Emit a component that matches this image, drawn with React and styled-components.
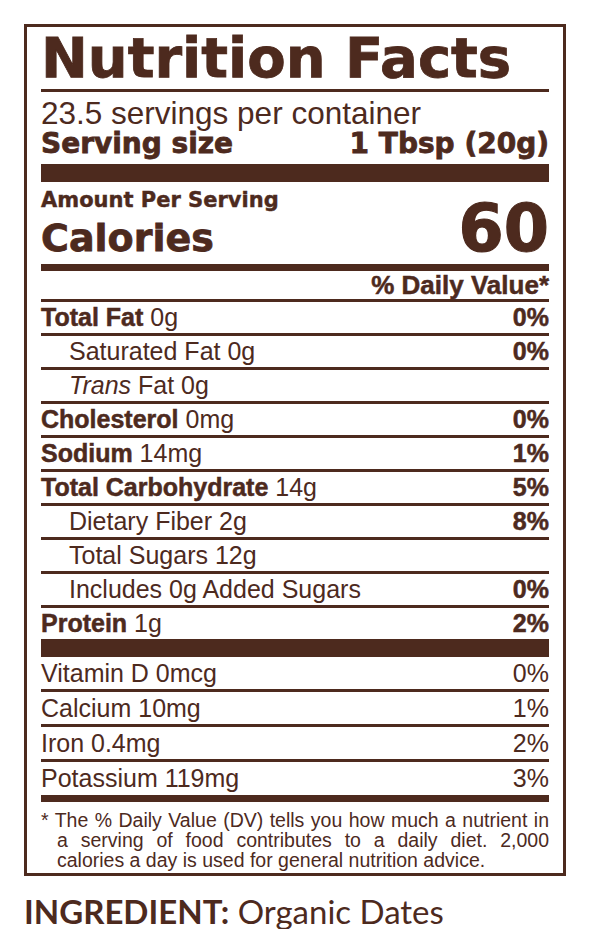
import styled, { createGlobalStyle } from "styled-components";

const BROWN = "#4d2a1e";

const GlobalStyle = createGlobalStyle`
  body {
    margin: 0;
    background: #ffffff;
    color: ${BROWN};
    font-family: "Liberation Sans", Arial, sans-serif;
  }
`;

const Page = styled.div`
  width: 590px;
  padding: 24px 24px 0;
  box-sizing: border-box;
`;

const Label = styled.section`
  width: 542px;
  box-sizing: border-box;
  border: 3px solid ${BROWN};
  padding: 0 14px 3px;

  b {
    font-weight: 700;
    -webkit-text-stroke: 0.5px ${BROWN};
  }
`;

const Heavy = styled.div`
  font-family: "DejaVu Sans", sans-serif;
  font-weight: 700;
  -webkit-text-stroke: ${(p) => p.$stroke || 0.8}px ${BROWN};
`;

const Title = styled(Heavy)`
  margin: 3px 0 3px;
  font-size: 56px;
  line-height: 56px;
  white-space: nowrap;
`;

const Rule = styled.div`
  height: ${(p) => p.$h || 3}px;
  background: ${BROWN};
  margin: ${(p) => p.$m || "0"};
`;

const Servings = styled.div`
  padding-top: 7px;
  font-size: 31.5px;
  line-height: 29px;
`;

const ServingSize = styled(Heavy)`
  display: flex;
  justify-content: space-between;
  font-size: 28px;
  line-height: 30px;
  margin: 1px 0 5px;
`;

const CaloriesBlock = styled(Heavy)`
  display: flex;
  justify-content: space-between;
  align-items: last baseline;
  padding-top: 7px;
  margin-bottom: 3px;
`;

const Amount = styled.div`
  font-size: 21px;
  line-height: 22px;
  margin-bottom: 7px;
  -webkit-text-stroke: 0.4px ${BROWN};
`;

const Calories = styled.div`
  font-size: 38px;
  line-height: 40px;
`;

const CalNumber = styled.div`
  font-size: 65px;
  line-height: 64px;
  -webkit-text-stroke: 1.2px ${BROWN};
`;

const DailyHead = styled.div`
  text-align: right;
  font-size: 26px;
  line-height: 28px;
`;

const Row = styled.div`
  display: flex;
  justify-content: space-between;
  align-items: center;
  height: ${(p) => p.$h || 31}px;
  padding-left: ${(p) => (p.$indent ? 28 : 0)}px;
  font-size: 25px;
  line-height: ${(p) => p.$h || 31}px;
  border-bottom: ${(p) => (p.$last ? "none" : `3px solid ${BROWN}`)};
  white-space: nowrap;

  i {
    font-style: italic;
  }
`;

const Footnote = styled.p`
  margin: 0;
  padding: 8px 0 0 16px;
  text-indent: -16px;
  font-size: 19.5px;
  line-height: 20px;
  text-align: justify;
  text-align-last: left;
`;

const Ingredient = styled.div`
  margin-top: 17px;
  font-family: Lato, "Open Sans", sans-serif;
  font-size: 33px;
  line-height: 36px;
  white-space: nowrap;

  b {
    font-weight: 700;
  }
`;

const nutrients = [
  { bold: "Total Fat", rest: " 0g", pct: "0%" },
  { label: "Saturated Fat 0g", pct: "0%", indent: true },
  { trans: true, indent: true },
  { bold: "Cholesterol", rest: " 0mg", pct: "0%" },
  { bold: "Sodium", rest: " 14mg", pct: "1%" },
  { bold: "Total Carbohydrate", rest: " 14g", pct: "5%" },
  { label: "Dietary Fiber 2g", pct: "8%", indent: true },
  { label: "Total Sugars 12g", indent: true },
  { label: "Includes 0g Added Sugars", pct: "0%", indent: true },
  { bold: "Protein", rest: " 1g", pct: "2%" },
];

const vitamins = [
  { label: "Vitamin D 0mcg", pct: "0%" },
  { label: "Calcium 10mg", pct: "1%" },
  { label: "Iron 0.4mg", pct: "2%" },
  { label: "Potassium 119mg", pct: "3%" },
];

export default function App() {
  return (
    <>
      <GlobalStyle />
      <Page>
        <Label>
          <Title>Nutrition Facts</Title>
          <Rule />
          <Servings>23.5 servings per container</Servings>
          <ServingSize>
            <span>Serving size</span>
            <span>1 Tbsp (20g)</span>
          </ServingSize>
          <Rule $h={18} />
          <CaloriesBlock>
            <div>
              <Amount>Amount Per Serving</Amount>
              <Calories>Calories</Calories>
            </div>
            <CalNumber>60</CalNumber>
          </CaloriesBlock>
          <Rule $h={7} />
          <DailyHead>
            <b>% Daily Value*</b>
          </DailyHead>
          <Rule />
          {nutrients.map((n, i) => (
            <Row key={i} $indent={n.indent} $last={i === nutrients.length - 1}>
              <span>
                {n.trans ? (
                  <>
                    <i>Trans</i> Fat 0g
                  </>
                ) : n.bold ? (
                  <>
                    <b>{n.bold}</b>
                    {n.rest}
                  </>
                ) : (
                  n.label
                )}
              </span>
              {n.pct && <b>{n.pct}</b>}
            </Row>
          ))}
          <Rule $h={18} />
          {vitamins.map((v, i) => (
            <Row key={i} $h={32} $last={i === vitamins.length - 1}>
              <span>{v.label}</span>
              <span>{v.pct}</span>
            </Row>
          ))}
          <Rule $h={7} $m="1px 0 0" />
          <Footnote>
            * The % Daily Value (DV) tells you how much a nutrient in a serving
            of food contributes to a daily diet. 2,000 calories a day is used
            for general nutrition advice.
          </Footnote>
        </Label>
        <Ingredient>
          <b>INGREDIENT:</b> Organic Dates
        </Ingredient>
      </Page>
    </>
  );
}
